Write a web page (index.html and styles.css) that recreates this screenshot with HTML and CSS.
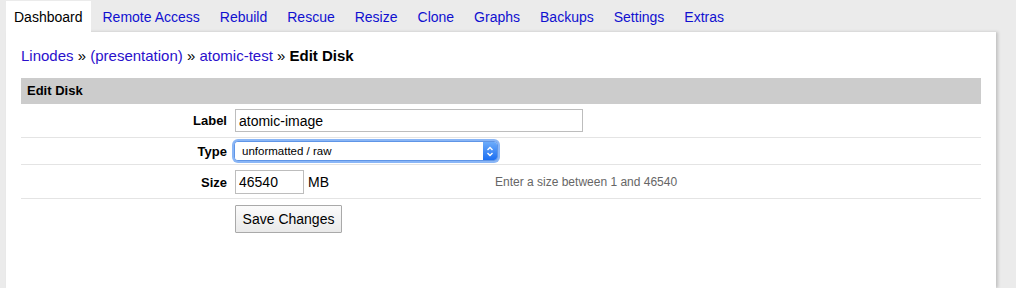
FILE: index.html
```html
<!DOCTYPE html>
<html>
<head>
  <title>Edit Disk</title>
  <link rel="stylesheet" href="styles.css">
</head>
<body>
  <!-- Tab bar -->
  <div class="tabs">
    <a class="tab aktif" href="#">Dashboard</a>
    <a class="tab" href="#">Remote Access</a>
    <a class="tab" href="#">Rebuild</a>
    <a class="tab" href="#">Rescue</a>
    <a class="tab" href="#">Resize</a>
    <a class="tab" href="#">Clone</a>
    <a class="tab" href="#">Graphs</a>
    <a class="tab" href="#">Backups</a>
    <a class="tab" href="#">Settings</a>
    <a class="tab" href="#">Extras</a>
  </div>

  <div class="panel">
    <div class="jejak">
      <a href="#">Linodes</a> &raquo; <a href="#">(presentation)</a> &raquo; <a href="#">atomic-test</a> &raquo; <b>Edit Disk</b>
    </div>

    <div class="kepala">Edit Disk</div>

    <div class="baris baris-label">
      <label class="nama">Label</label>
      <input class="isian isian-panjang" type="text" value="atomic-image">
    </div>

    <div class="baris baris-tipe">
      <label class="nama">Type</label>
      <div class="pilih">
        <select>
          <option>unformatted / raw</option>
        </select>
        <span class="panah">
          <svg width="8" height="11" viewBox="0 0 8 11">
            <path d="M1.5 4 L4 1.5 L6.5 4 M1.5 7 L4 9.5 L6.5 7" fill="none" stroke="#fff" stroke-width="1.4"/>
          </svg>
        </span>
      </div>
    </div>

    <div class="baris baris-ukuran">
      <label class="nama">Size</label>
      <div class="ukuran">
        <input class="isian isian-pendek" type="text" value="46540">
        <span>MB</span>
      </div>
      <div class="petunjuk">Enter a size between 1 and 46540</div>
    </div>

    <div class="baris-tombol">
      <button>Save Changes</button>
    </div>
  </div>
</body>
</html>
```

FILE: styles.css
```css
body {
  margin: 0;
  padding: 0;
  background: #ebebeb;
  height: 288px;
  overflow: hidden;
  font-family: "Liberation Sans", Arial, sans-serif;
  font-size: 14px;
  color: #000;
}
a {
  color: #1a0dcc;
  text-decoration: none;
}
.tabs {
  display: flex;
  padding: 1px 0 0 6px;
  height: 31px;
}
.tab {
  padding: 2px 8px 0;
  margin-right: 4px;
  line-height: 29px;
  color: #1010d0;
}
.tab.aktif {
  background: #fff;
  color: #000;
}
.panel {
  margin-left: 6px;
  width: 960px;
  height: 241px;
  padding: 15px 15px 0;
  background: #fff;
  box-shadow: 2px 0 3px rgba(0, 0, 0, 0.18);
}
.jejak {
  font-size: 15px;
  line-height: 18px;
  margin-bottom: 13px;
}
.jejak a {
  color: #2a10cc;
}
.kepala {
  background: #ccc;
  height: 26px;
  line-height: 26px;
  padding-left: 6px;
  font-weight: bold;
  font-size: 13px;
}
.baris {
  display: grid;
  grid-template-columns: 206px 252px 1fr;
  column-gap: 8px;
  align-items: center;
  border-bottom: 1px solid #e4e4e4;
}
.baris-label {
  padding: 5px 0;
}
.baris-tipe {
  padding: 3px 0;
}
.baris-ukuran {
  padding: 5px 0 4px;
}
.nama {
  text-align: right;
  font-weight: bold;
  font-size: 13px;
}
.isian {
  font-family: "Liberation Sans", Arial, sans-serif;
  font-size: 14px;
  border: 1px solid #bdbdbd;
  padding: 0 3px;
  margin: 0;
  outline: none;
  box-sizing: border-box;
}
.isian-panjang {
  grid-column: 2 / 4;
  width: 348px;
  height: 23px;
}
.isian-pendek {
  width: 69px;
  height: 24px;
}
.ukuran {
  display: flex;
  align-items: center;
  gap: 4px;
}
.pilih {
  display: flex;
  width: 262px;
  height: 18px;
  margin-left: -1px;
  border: 1px solid #5f95e6;
  border-radius: 4px;
  box-shadow: 0 0 0 2px #8ab6f6;
  overflow: hidden;
  background: #fff;
}
.pilih select {
  flex: 1;
  appearance: none;
  -webkit-appearance: none;
  border: none;
  outline: none;
  background: #fff;
  font-family: "Liberation Sans", Arial, sans-serif;
  font-size: 11.5px;
  padding: 0 0 0 7px;
  margin: 0;
  color: #000;
}
.panah {
  width: 14px;
  display: flex;
  align-items: center;
  justify-content: center;
  background: linear-gradient(to bottom, #6cabfa, #1c6ff2);
}
.petunjuk {
  font-size: 12px;
  color: #666;
}
.baris-tombol {
  padding: 6px 0 0 214px;
}
button {
  font-family: "Liberation Sans", Arial, sans-serif;
  font-size: 14px;
  height: 28px;
  width: 107px;
  padding: 0;
  border: 1px solid #a9a9a9;
  border-radius: 1px;
  background: linear-gradient(to bottom, #fbfbfb, #e9e9e9);
  color: #000;
}
```
